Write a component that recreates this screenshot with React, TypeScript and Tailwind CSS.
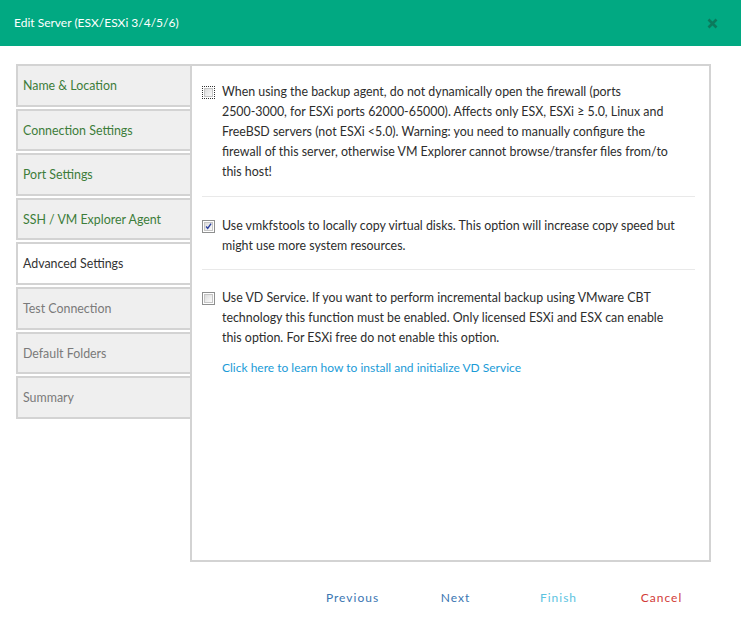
import React, { useState } from 'react';

type Tab = { name: string; state: 'done' | 'active' | 'todo' };

const tabs: Tab[] = [
  { name: 'Name & Location', state: 'done' },
  { name: 'Connection Settings', state: 'done' },
  { name: 'Port Settings', state: 'done' },
  { name: 'SSH / VM Explorer Agent', state: 'done' },
  { name: 'Advanced Settings', state: 'active' },
  { name: 'Test Connection', state: 'todo' },
  { name: 'Default Folders', state: 'todo' },
  { name: 'Summary', state: 'todo' },
];

// old-school windows style checkbox
function Check({ checked, focused, onClick }: { checked: boolean; focused?: boolean; onClick: () => void }) {
  return (
    <button
      onClick={onClick}
      className={`mt-[4px] w-[13px] h-[13px] shrink-0 flex items-center justify-center bg-white ${
        focused ? 'border border-dotted border-[#333]' : 'border border-[#8e8f8f]'
      }`}
    >
      <span className="w-[9px] h-[9px] border border-[#c5c5c5] bg-gradient-to-br from-[#dcdcdc] to-[#fbfbfb] flex items-center justify-center">
        {checked && (
          <svg width="9" height="9" viewBox="0 0 9 9">
            <path d="M1.5 4.5 L3.5 7 L7.8 0.8" fill="none" stroke="#2a3f9e" strokeWidth="1.8" />
          </svg>
        )}
      </span>
    </button>
  );
}

export default function App() {
  const [opts, setOpts] = useState({ firewall: false, vmkfs: true, vds: false });

  return (
    <div className="w-[741px] h-[624px] bg-white overflow-hidden" style={{ fontFamily: 'Lato, "Open Sans", sans-serif' }}>
      {/* Header */}
      <div className="h-[46px] bg-[#01a982] flex items-center justify-between pl-[14px] pr-[23px]">
        <span className="text-white text-[12px]">Edit Server (ESX/ESXi 3/4/5/6)</span>
        <svg width="11" height="11" viewBox="0 0 11 11">
          <path d="M1.5 1.5 L9.5 9.5 M9.5 1.5 L1.5 9.5" stroke="#0b7a5c" strokeWidth="2.6" />
        </svg>
      </div>

      {/* Body */}
      <div className="pt-[18px] pl-[16px] pr-[30px]">
        <div className="flex h-[498px]">
          {/* Tabs */}
          <div className="w-[174px] shrink-0 flex flex-col gap-[2px]">
            {tabs.map((t) => (
              <div
                key={t.name}
                className={`h-[42.6px] flex items-center pl-[5px] pt-[2px] border-2 border-r-0 border-[#d3d3d3] text-[12.4px] ${
                  t.state === 'active'
                    ? 'bg-white text-[#333]'
                    : t.state === 'done'
                    ? 'bg-[#efefef] text-[#3d7d3a]'
                    : 'bg-[#efefef] text-[#7a7a7a]'
                }`}
              >
                {t.name}
              </div>
            ))}
          </div>

          {/* Content */}
          <div className="flex-1 min-w-0 border-2 border-[#d3d3d3] pl-[10px] pr-[14px] text-[12.4px] leading-[20px] text-[#2d2d2d]">
            <div className="flex gap-[7px] pt-[16px] pb-[14px] border-b border-[#e9e9e9]">
              <Check focused checked={opts.firewall} onClick={() => setOpts({ ...opts, firewall: !opts.firewall })} />
              <p className="whitespace-nowrap">
                When using the backup agent, do not dynamically open the firewall (ports
                <br />
                2500-3000, for ESXi ports 62000-65000). Affects only ESX, ESXi ≥ 5.0, Linux and
                <br />
                FreeBSD servers (not ESXi &lt;5.0). Warning: you need to manually configure the
                <br />
                firewall of this server, otherwise VM Explorer cannot browse/transfer files from/to
                <br />
                this host!
              </p>
            </div>

            <div className="flex gap-[7px] pt-[19px] pb-[13px] border-b border-[#e9e9e9]">
              <Check checked={opts.vmkfs} onClick={() => setOpts({ ...opts, vmkfs: !opts.vmkfs })} />
              <p className="whitespace-nowrap">
                Use vmkfstools to locally copy virtual disks. This option will increase copy speed but
                <br />
                might use more system resources.
              </p>
            </div>

            <div className="flex gap-[7px] pt-[18px]">
              <Check checked={opts.vds} onClick={() => setOpts({ ...opts, vds: !opts.vds })} />
              <div>
                <p className="whitespace-nowrap">
                  Use VD Service. If you want to perform incremental backup using VMware CBT
                  <br />
                  technology this function must be enabled. Only licensed ESXi and ESX can enable
                  <br />
                  this option. For ESXi free do not enable this option.
                </p>
                <a className="block mt-[10px] text-[12px] text-[#1a9bd7] cursor-pointer">
                  Click here to learn how to install and initialize VD Service
                </a>
              </div>
            </div>
          </div>
        </div>

        {/* Footer buttons */}
        <div className="flex justify-end mt-[27px] mr-[-2px] text-[12px] tracking-[1px]">
          <button className="w-[103px] text-center text-[#3a76b2]">Previous</button>
          <button className="w-[103px] text-center text-[#3a76b2]">Next</button>
          <button className="w-[103px] text-center text-[#5cc3df]">Finish</button>
          <button className="w-[103px] text-center text-[#d23b38]">Cancel</button>
        </div>
      </div>
    </div>
  );
}
